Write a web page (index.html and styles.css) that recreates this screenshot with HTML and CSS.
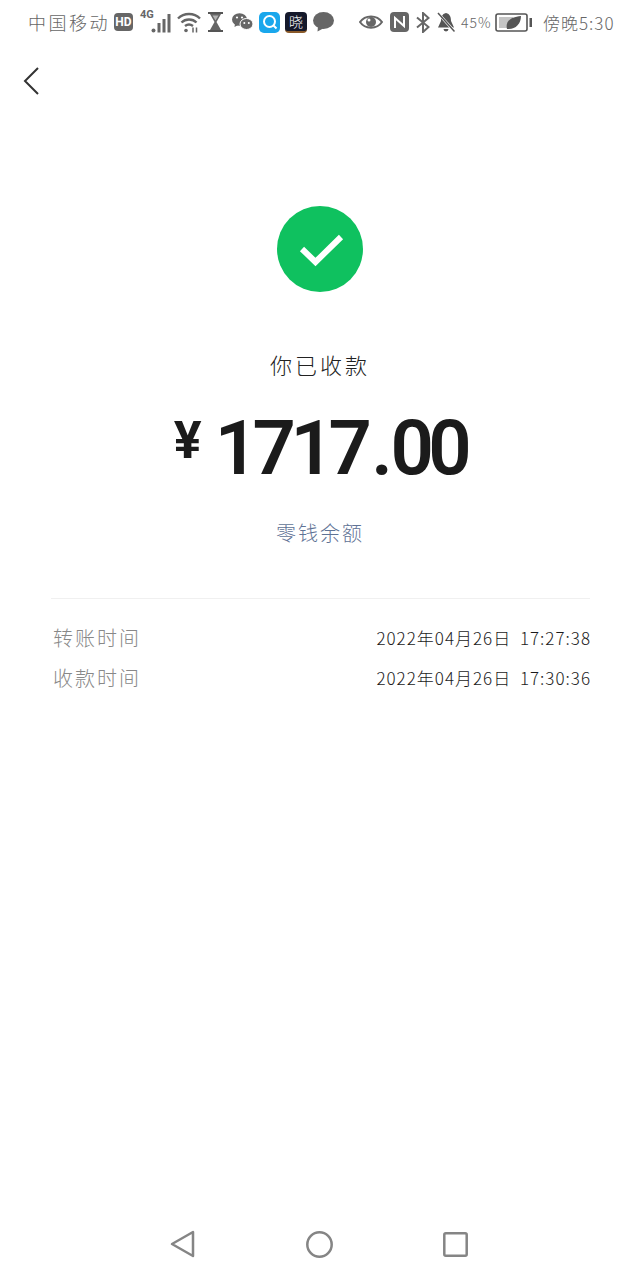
FILE: index.html
```html
<!DOCTYPE html>
<html>
<head>
    <title>收款</title>
    <link rel="stylesheet" href="styles.css">
</head>
<body>
    <div class="status-bar">
        <span class="carrier">中国移动</span>
        <span class="hd-badge">HD</span>
        <span class="signal">
            <span class="signal-label">4G</span>
            <svg width="21" height="20" viewBox="0 0 21 20"><g fill="#666"><circle cx="2.500" cy="17.500" r="2"/><rect x="6.500" y="10" width="3" height="9.500"/><rect x="11.500" y="6" width="3" height="13.500"/><rect x="16.500" y="1" width="3" height="18.500"/></g></svg>
        </span>
        <svg class="wifi" width="24" height="22" viewBox="0 0 24 22"><g fill="none" stroke="#666" stroke-width="2.400"><path d="M1 7.500C7 1.500 17 1.500 23 7.500"/><path d="M4.500 11.500C8.500 7.500 15.500 7.500 19.500 11.500"/><path d="M8 15C10.500 13 13.500 13 16 15"/></g><circle cx="9" cy="19.500" r="1.800" fill="#666"/><path d="M16 16.500v5M19.500 16.500v5" stroke="#666" stroke-width="1.500"/></svg>
        <svg class="glass" width="15" height="20" viewBox="0 0 15 20"><path d="M0 1h15M0 19h15" stroke="#555" stroke-width="2"/><path d="M2 2h11L8.500 10 13 18H2L6.500 10z" fill="#666"/><path d="M4.500 3.500h6L7.500 8.500z" fill="#fff" opacity=".5"/></svg>
        <svg class="wechat" width="21" height="18" viewBox="0 0 21 18"><ellipse cx="7.500" cy="6.500" rx="7.500" ry="6.300" fill="#666"/><path d="M3 10.500 2.500 14 7 11.500z" fill="#666"/><ellipse cx="14.500" cy="11" rx="6.500" ry="5.500" fill="#666" stroke="#fff"/><circle cx="12.300" cy="10" r="1" fill="#fff"/><circle cx="16.800" cy="10" r="1" fill="#fff"/><circle cx="5" cy="4.500" r="1.100" fill="#fff"/><circle cx="10" cy="4.500" r="1.100" fill="#fff"/></svg>
        <span class="app-search">
            <svg width="16" height="16" viewBox="0 0 16 16"><circle cx="7.500" cy="7.500" r="5.500" fill="none" stroke="#fff" stroke-width="2"/><path d="M11.500 11.500 14.500 14.500" stroke="#fff" stroke-width="2"/></svg>
        </span>
        <span class="app-xiao">晓</span>
        <svg class="bubble" width="21" height="20" viewBox="0 0 21 20"><ellipse cx="10.500" cy="8.500" rx="10.500" ry="8.500" fill="#666"/><path d="M5 14 4.500 19.500 11 16z" fill="#666"/></svg>

        <svg class="eye" width="24" height="16" viewBox="0 0 24 16"><path d="M1 8C6 0.500 18 0.500 23 8 18 15.500 6 15.500 1 8z" fill="none" stroke="#666" stroke-width="2"/><circle cx="12" cy="8" r="5" fill="#666"/><circle cx="10" cy="6" r="1.500" fill="#fff"/></svg>
        <svg class="nfc" width="19" height="20" viewBox="0 0 19 20"><rect width="19" height="20" rx="4" fill="#666"/><path d="M5 16V6l9 8V4" fill="none" stroke="#fff" stroke-width="2"/></svg>
        <svg class="bluetooth" width="14" height="21" viewBox="0 0 14 21"><path d="M1 5.500 12.500 15 7 20V1l5.500 5L1 15.500" fill="none" stroke="#666" stroke-width="2"/></svg>
        <svg class="bell" width="18" height="20" viewBox="0 0 18 20"><path d="M9 1C5 2 4 5 4 9L1 15.500H17L14 9C14 5 13 2 9 1z" fill="#555"/><path d="M6.500 17h5a2.500 2.500 0 0 1-5 0z" fill="#555"/><path d="M0 0 17.500 19.500" stroke="#fff" stroke-width="2.600"/><path d="M1 1 17.500 19.500" stroke="#555" stroke-width="1.500"/></svg>
        <span class="percent">45%</span>
        <svg class="battery" width="37" height="19" viewBox="0 0 37 19"><rect x="1" y="1" width="31" height="17" rx="2" fill="#fff" stroke="#555" stroke-width="1.600"/><rect x="4" y="4" width="14" height="11" fill="#c4c4c4"/><path d="M12 16C10 8 16 4 26 3 26 11 20 17 12 16z" fill="#555"/><rect x="34.500" y="5" width="2.500" height="9" fill="#555"/></svg>
        <span class="clock">傍晚5:30</span>
    </div>

    <div class="top-bar">
        <svg width="16" height="28" viewBox="0 0 16 28"><path d="M15 1 2 14 15 27" fill="none" stroke="#333" stroke-width="2"/></svg>
    </div>

    <div class="summary">
        <svg class="check" width="86" height="86" viewBox="0 0 86 86"><circle cx="43" cy="43" r="43" fill="#0fc15f"/><path d="M25 43 38.500 56 64 31" fill="none" stroke="#fff" stroke-width="6"/></svg>
        <div class="summary-title">你已收款</div>
        <div class="amount"><span class="currency">¥</span><span class="amount-value">1717<span class="amount-dot">.</span>00</span></div>
        <div class="balance-link">零钱余额</div>
    </div>

    <div class="details">
        <div class="detail-row">
            <span class="detail-label">转账时间</span>
            <span class="detail-value">2022年04月26日 17:27:38</span>
        </div>
        <div class="detail-row">
            <span class="detail-label">收款时间</span>
            <span class="detail-value">2022年04月26日 17:30:36</span>
        </div>
    </div>

    <div class="nav-bar">
        <svg width="26" height="28" viewBox="0 0 26 28"><path d="M2 14 23 2V26z" fill="none" stroke="#858585" stroke-width="2.500" stroke-linejoin="round"/></svg>
        <svg width="27" height="27" viewBox="0 0 27 27"><circle cx="13.500" cy="13.500" r="12.200" fill="none" stroke="#858585" stroke-width="2.500"/></svg>
        <svg width="25" height="25" viewBox="0 0 25 25"><rect x="1.300" y="1.300" width="22.400" height="22.400" rx="1.500" fill="none" stroke="#858585" stroke-width="2.500"/></svg>
    </div>
</body>
</html>
```

FILE: styles.css
```css
body {
    margin: 0;
    height: 1280px;
    overflow: hidden;
    display: flex;
    flex-direction: column;
    background-color: #fff;
    font-family: "Noto Sans CJK SC", "Noto Sans", sans-serif;
}
.status-bar {
    display: flex;
    align-items: center;
    height: 44px;
    padding-left: 28px;
    color: #666;
}
.carrier {
    width: 86px;
    font-size: 18px;
    font-weight: 300;
    letter-spacing: 2.500px;
    white-space: nowrap;
}
.hd-badge {
    width: 19px;
    height: 18px;
    line-height: 18px;
    border-radius: 4px;
    background-color: #666;
    color: #fff;
    font-family: Roboto, sans-serif;
    font-size: 12px;
    font-weight: 700;
    text-align: center;
}
.signal {
    display: flex;
    align-items: flex-end;
    margin-left: 7px;
    position: relative;
    height: 22px;
    width: 32px;
    justify-content: flex-end;
}
.signal-label {
    position: absolute;
    left: 0;
    top: -3px;
    font-family: Roboto, sans-serif;
    font-size: 11px;
    font-weight: 700;
}
.wifi { margin-left: 5px; }
.glass { margin-left: 7px; }
.wechat { margin-left: 9px; }
.app-search {
    display: flex;
    align-items: center;
    justify-content: center;
    width: 21px;
    height: 21px;
    margin-left: 6px;
    border-radius: 5px;
    background-color: #1aa7ec;
}
.app-xiao {
    width: 22px;
    height: 21px;
    margin-left: 5px;
    line-height: 19px;
    border-radius: 4px;
    border-bottom: 2px solid #8a5a2a;
    box-sizing: border-box;
    background-color: #15192b;
    color: #fff;
    font-size: 14px;
    font-weight: 300;
    text-align: center;
}
.bubble { margin-left: 6px; }
.eye { margin-left: 25px; }
.nfc { margin-left: 7px; }
.bluetooth { margin-left: 7px; }
.bell { margin-left: 7px; }
.percent {
    width: 29px;
    margin-left: 6px;
    font-size: 14px;
    font-weight: 300;
    letter-spacing: 1px;
}
.battery { margin-left: 5px; }
.clock {
    margin-left: 11px;
    font-size: 17px;
    font-weight: 300;
    letter-spacing: 1px;
    white-space: nowrap;
}
.top-bar {
    display: flex;
    align-items: center;
    height: 73px;
    padding-left: 23px;
}
.summary {
    display: flex;
    flex-direction: column;
    align-items: center;
    padding-top: 89px;
}
.check { display: block; }
.summary-title {
    margin-top: 55px;
    height: 34px;
    line-height: 34px;
    color: #222;
    font-size: 22px;
    font-weight: 300;
    letter-spacing: 3px;
}
.amount {
    display: flex;
    align-items: center;
    height: 90px;
    margin-top: 22px;
    color: #1b1b1b;
    font-family: Roboto, sans-serif;
    font-weight: 600;
}
.currency {
    margin-right: 13px;
    font-size: 52px;
    font-weight: 700;
    line-height: 1;
    padding-bottom: 14px;
}
.amount-value {
    font-size: 76px;
    letter-spacing: -5.500px;
}
.amount-dot {
    margin: 0 3px 0 5px;
}
.balance-link {
    margin-top: 25px;
    height: 30px;
    line-height: 30px;
    color: #5f7396;
    font-size: 20px;
    font-weight: 300;
    letter-spacing: 2px;
}
.details {
    margin: 50px 50px 0 51px;
    padding-top: 18px;
    border-top: 1px solid #f0f0f0;
}
.detail-row {
    display: flex;
    justify-content: space-between;
    align-items: center;
    height: 40px;
    padding-left: 2px;
}
.detail-label {
    color: #888;
    font-size: 20px;
    font-weight: 300;
    letter-spacing: 2px;
}
.detail-value {
    color: #1a1a1a;
    font-size: 17px;
    font-weight: 300;
    letter-spacing: 1px;
    word-spacing: 4px;
    margin-right: -1px;
}
.nav-bar {
    display: flex;
    align-items: center;
    margin-top: auto;
    height: 72px;
    padding-left: 170px;
    gap: 110px;
}
```
